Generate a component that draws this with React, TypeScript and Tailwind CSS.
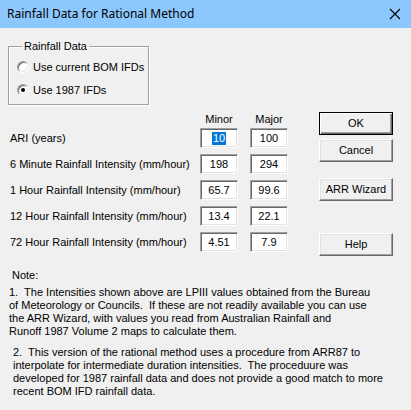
import React from "react";

function Radio({ checked }: { checked?: boolean }) {
  return (
    <span className="relative w-[12px] h-[12px] rounded-full bg-white border border-t-[#a0a0a0] border-l-[#a0a0a0] border-b-white border-r-white shadow-[inset_1px_1px_0_#696969,inset_-1px_-1px_0_#e3e3e3] flex items-center justify-center shrink-0">
      {checked && <span className="w-[4px] h-[4px] rounded-full bg-black" />}
    </span>
  );
}

function Box({ children }: { children: React.ReactNode }) {
  return (
    <div className="w-[38px] h-[20px] bg-white border border-t-[#a0a0a0] border-l-[#a0a0a0] border-b-white border-r-white shadow-[inset_1px_1px_0_#696969,inset_-1px_-1px_0_#e3e3e3] flex items-center justify-center leading-[13px]">
      {children}
    </div>
  );
}

function Btn({ children, def }: { children: React.ReactNode; def?: boolean }) {
  return def ? (
    <div className="w-[74px] h-[23px] bg-[#f0f0f0] border border-black shadow-[inset_1px_1px_0_#fff,inset_-1px_-1px_0_#696969,inset_-2px_-2px_0_#a0a0a0] flex items-center justify-center">
      {children}
    </div>
  ) : (
    <div className="w-[74px] h-[23px] bg-[#f0f0f0] border border-t-white border-l-white border-r-[#696969] border-b-[#696969] shadow-[inset_-1px_-1px_0_#a0a0a0,inset_1px_1px_0_#e3e3e3] flex items-center justify-center">
      {children}
    </div>
  );
}

const rows: [string, React.ReactNode, string][] = [
  ["ARI (years)", <span className="bg-[#0078d7] text-white px-[1px]">10</span>, "100"],
  ["6 Minute Rainfall Intensity (mm/hour)", "198", "294"],
  ["1 Hour Rainfall Intensity (mm/hour)", "65.7", "99.6"],
  ["12 Hour Rainfall Intensity (mm/hour)", "13.4", "22.1"],
  ["72 Hour Rainfall Intensity (mm/hour)", "4.51", "7.9"],
];

export default function App() {
  return (
    <div className="w-[411px] h-[410px] bg-[#f0f0f0] font-['Liberation_Sans',Arial,sans-serif] text-[11px] text-black overflow-hidden">
      <div className="h-[28px] bg-[#8cc8fe] flex items-center justify-between pl-[7px] pr-[9px]">
        <span className="text-[12px] font-['Noto_Sans',sans-serif] leading-[16px]">Rainfall Data for Rational Method</span>
        <svg width="12" height="12" viewBox="0 0 12 12" className="mr-[1px]">
          <path d="M1 1 L11 11 M11 1 L1 11" stroke="#000" strokeWidth="1.1" fill="none" />
        </svg>
      </div>
      <div className="flex">
        <div className="w-[300px]">
          <fieldset className="ml-[8px] mt-[12px] w-[141px] h-[65px] border border-[#a0a0a0] shadow-[inset_1px_1px_0_#fff,1px_1px_0_#fff] pl-[8px]">
            <legend className="ml-[5px] px-[2px] leading-[13px]">Rainfall Data</legend>
            <div className="flex flex-col gap-[7px] mt-[6px]">
              <div className="flex items-center gap-[4px] h-[16px]">
                <Radio />
                <span>Use current BOM IFDs</span>
              </div>
              <div className="flex items-center gap-[4px] h-[16px]">
                <Radio checked />
                <span>Use 1987 IFDs</span>
              </div>
            </div>
          </fieldset>
          <div className="flex mt-[7px] h-[14px] leading-[14px]">
            <span className="w-[200px]" />
            <span className="w-[38px] text-center">Minor</span>
            <span className="w-[12px]" />
            <span className="w-[38px] text-center">Major</span>
          </div>
          <div className="flex flex-col gap-[6px] mt-[2px]">
            {rows.map(([label, a, b]) => (
              <div key={label} className="flex items-center h-[20px]">
                <span className="w-[200px] pl-[10px] whitespace-nowrap">{label}</span>
                <Box>{a}</Box>
                <span className="w-[12px]" />
                <Box>{b}</Box>
              </div>
            ))}
          </div>
        </div>
        <div className="ml-[19px] mt-[84px] flex flex-col">
          <Btn def>OK</Btn>
          <div className="mt-[4px]"><Btn>Cancel</Btn></div>
          <div className="mt-[16px]"><Btn>ARR Wizard</Btn></div>
          <div className="mt-[32px]"><Btn>Help</Btn></div>
        </div>
      </div>
      <div className="mt-[13px] pl-[12px] leading-[13px]">Note:</div>
      <div className="mt-[4px] pl-[9px] leading-[13px] whitespace-pre">
        <div>1.  The Intensities shown above are LPIII values obtained from the Bureau</div>
        <div>of Meteorology or Councils.  If these are not readily available you can use</div>
        <div>the ARR Wizard, with values you read from Australian Rainfall and</div>
        <div>Runoff 1987 Volume 2 maps to calculate them.</div>
      </div>
      <div className="mt-[8px] pl-[13px] leading-[13px] whitespace-pre">
        <div>2.  This version of the rational method uses a procedure from ARR87 to</div>
        <div>interpolate for intermediate duration intensities.  The proceduure was</div>
        <div>developed for 1987 rainfall data and does not provide a good match to more</div>
        <div>recent BOM IFD rainfall data.</div>
      </div>
    </div>
  );
}
